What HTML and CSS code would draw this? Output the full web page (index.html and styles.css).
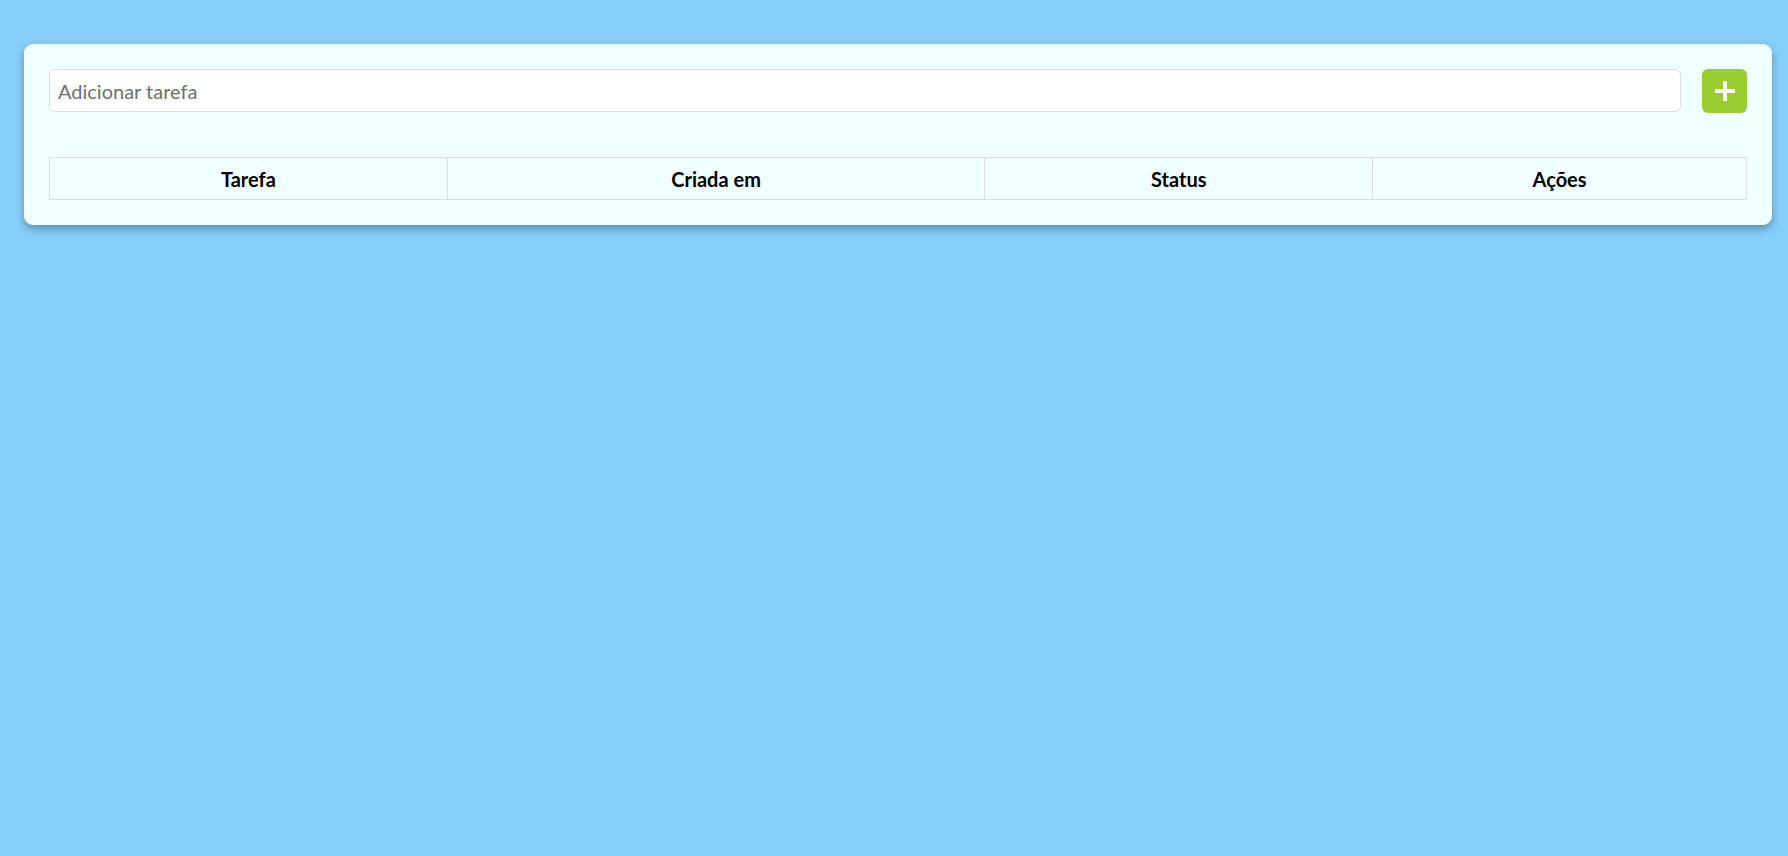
FILE: index.html
```html
<!DOCTYPE html>
<html lang="pt-BR">
<head>
<meta charset="utf-8">
<title>Tarefas</title>
<link rel="stylesheet" href="styles.css">
</head>
<body>
<main class="card">
  <form class="add-row" onsubmit="return false">
    <input class="task-input" type="text" placeholder="Adicionar tarefa">
    <button class="add-btn" type="submit" aria-label="Adicionar">
      <svg width="22" height="22" viewBox="0 0 22 22"><path d="M11 1v20M1 11h20" stroke="#fff" stroke-width="4" fill="none"/></svg>
    </button>
  </form>
  <table class="tasks">
    <colgroup>
      <col class="c1"><col class="c2"><col class="c3"><col class="c4">
    </colgroup>
    <thead>
      <tr><th>Tarefa</th><th>Criada em</th><th>Status</th><th>Ações</th></tr>
    </thead>
    <tbody></tbody>
  </table>
</main>
</body>
</html>
```

FILE: styles.css
```css
* { box-sizing: border-box; }
html, body { height: 100%; }
body {
  margin: 0;
  background: #87cefa;
  font-family: Lato, "Open Sans", sans-serif;
  padding: 44px 16px 0 24px;
}
.card {
  background: #f0ffff;
  border-radius: 9px;
  padding: 25px;
  box-shadow: 0 4px 8px rgba(0, 0, 0, 0.3);
}
.add-row {
  display: flex;
  gap: 21px;
  margin: 0 0 44px;
}
.task-input {
  flex: 1;
  height: 43px;
  border: 1px solid #dedede;
  border-radius: 6px;
  background: #fff;
  padding: 0 8px;
  font-family: inherit;
  font-size: 20px;
  color: #333;
  outline: none;
}
.task-input::placeholder { color: #6f6f6f; }
.add-btn {
  width: 45px;
  height: 44px;
  border: none;
  border-radius: 6px;
  background: #9acd32;
  display: flex;
  align-items: center;
  justify-content: center;
  padding: 0;
  cursor: pointer;
}
.tasks {
  width: 100%;
  border-collapse: collapse;
  table-layout: fixed;
}
.c1 { width: 23.44%; }
.c2 { width: 31.68%; }
.c3 { width: 22.85%; }
.c4 { width: 22.03%; }
.tasks th {
  border: 1px solid #dedede;
  height: 42px;
  padding: 0 8px;
  font-size: 20px;
  font-weight: 700;
  color: #000;
  text-align: center;
  background: #f0ffff;
}
```
